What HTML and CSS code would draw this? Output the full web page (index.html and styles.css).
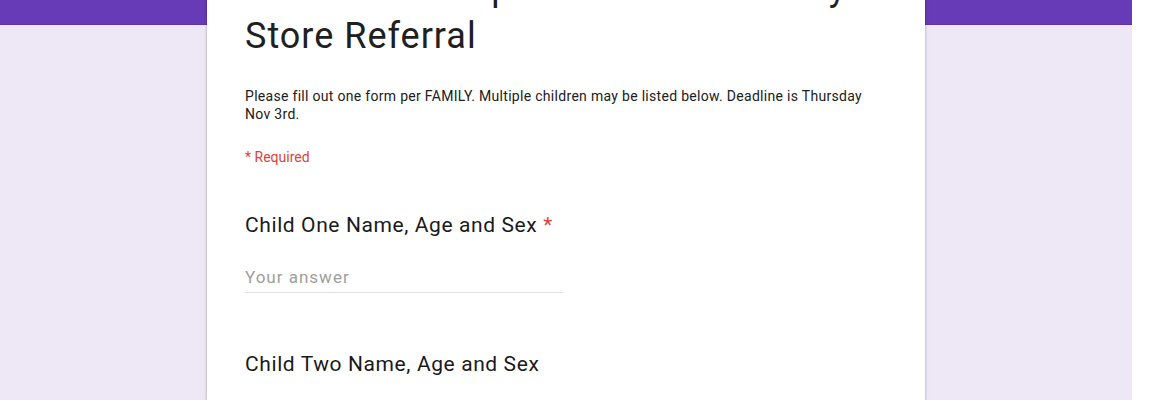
FILE: index.html
```html
<!DOCTYPE html>
<html>

<head>
	<meta charset="utf-8">
	<title>Store Referral</title>
	<link rel="stylesheet" href="styles.css">
</head>

<body>
	<div class="page">
		<div class="form">
			<div class="head">
				<h1 class="title">Cedarwood Baptist Association Toy Store Referral</h1>
				<p class="desc">Please fill out one form per FAMILY. Multiple children may be listed below. Deadline is Thursday Nov 3rd.</p>
				<p class="req">* Required</p>
			</div>

			<div class="item">
				<div class="label">Child One Name, Age and Sex <span class="star">*</span></div>
				<div class="answer">Your answer</div>
			</div>

			<div class="item">
				<div class="label">Child Two Name, Age and Sex</div>
			</div>
		</div>
	</div>
	<div class="edge"></div>
</body>

</html>
```

FILE: styles.css
```css
* {
	margin: 0;
	padding: 0;
	box-sizing: border-box;
}

html,
body {
	height: 100%;
	overflow: hidden;
}

body {
	display: flex;
	font-family: Roboto, "Liberation Sans", Arial, sans-serif;
	color: #202020;
	background: #fff;
}

.page {
	width: 1132px;
	height: 100%;
	background: linear-gradient(#673ab7 0, #673ab7 24px, #5e34a8 24px, #5e34a8 25px, #ede7f6 25px);
	display: flex;
	justify-content: center;
}

.edge {
	flex: 1;
	background: #fff;
}

.form {
	width: 718px;
	margin-top: -36px;
	background: #fff;
	box-shadow: 0 0 2px rgba(0, 0, 0, 0.25), 0 2px 4px rgba(0, 0, 0, 0.12);
	padding: 0 38px;
}

.title {
	font-size: 36px;
	font-weight: 400;
	line-height: 48px;
	letter-spacing: 1px;
	color: #202020;
}

.desc {
	font-size: 14px;
	line-height: 18px;
	letter-spacing: 0.3px;
	margin-top: 27px;
}

.req {
	font-size: 14px;
	line-height: 18px;
	margin-top: 25px;
	color: #db4437;
}

.item {
	margin-top: 46px;
}

.label {
	font-size: 21px;
	line-height: 26px;
	letter-spacing: 0.6px;
	color: #1a1a1a;
}

.star {
	color: #db4437;
}

.answer {
	width: 318px;
	margin-top: 28px;
	padding-bottom: 4px;
	font-size: 17px;
	line-height: 22px;
	letter-spacing: 1px;
	color: #9e9e9e;
	border-bottom: 1px solid #e0e0e0;
}

.item + .item {
	margin-top: 58px;
}
```
